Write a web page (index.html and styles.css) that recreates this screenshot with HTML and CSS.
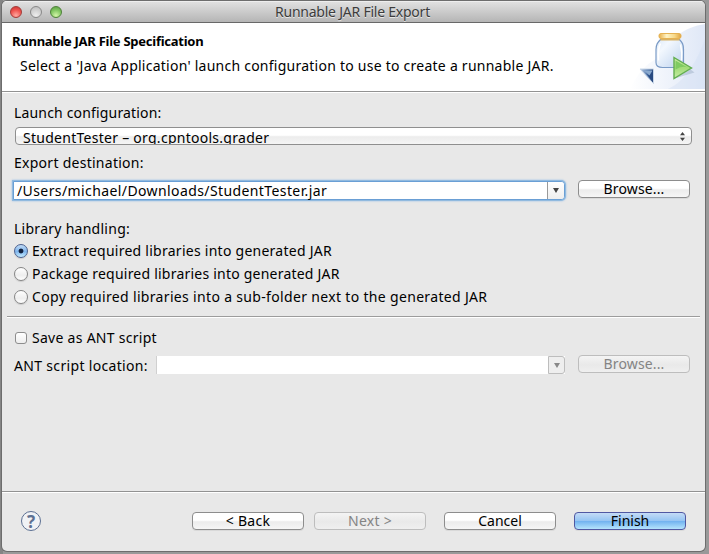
FILE: index.html
```html
<!DOCTYPE html>
<html lang="en">
<head>
<meta charset="utf-8">
<title>Runnable JAR File Export</title>
<link rel="stylesheet" href="styles.css">
</head>
<body>
<div class="window">
  <div class="titlebar">
    <div class="lights"><i class="light red"></i><i class="light gray"></i><i class="light green"></i></div>
    <span class="title">Runnable JAR File Export</span>
  </div>
  <header class="banner">
    <div class="banner-text">
      <h1><span>Runnable JAR File Specification</span></h1>
      <p><span>Select a 'Java Application' launch configuration to use to create a runnable JAR.</span></p>
    </div>
    <svg class="art" width="75" height="66" viewBox="0 0 75 66">
      <defs>
        <linearGradient id="bg" x1="0" x2="1"><stop offset="0" stop-color="#fff"/><stop offset="1" stop-color="#d5e0f4"/></linearGradient>
        <linearGradient id="glass" x1="0" x2="1" y2="1"><stop offset="0" stop-color="#dce9f6"/><stop offset=".3" stop-color="#f3f8fe"/><stop offset="1" stop-color="#bdd2ee"/></linearGradient>
        <linearGradient id="lid" x1="0" x2="1"><stop offset="0" stop-color="#e9b04a"/><stop offset=".35" stop-color="#fff4c6"/><stop offset=".7" stop-color="#f7d98a"/><stop offset="1" stop-color="#e2a540"/></linearGradient>
        <linearGradient id="blue" x1="0" x2="1"><stop offset="0" stop-color="#c3d3e6"/><stop offset=".6" stop-color="#4b71a8"/><stop offset="1" stop-color="#1c3769"/></linearGradient>
        <linearGradient id="go" x1="0" x2="0" y2="1"><stop offset="0" stop-color="#d3efaa"/><stop offset=".5" stop-color="#a2dc78"/><stop offset="1" stop-color="#c6eda6"/></linearGradient>
      </defs>
      <path d="M0 66C9 48 17 40 30 34C38 17 54 4 75 1V66Z" fill="url(#bg)" opacity=".75"/>
      <path d="M38 66C56 58 68 36 75 16V66Z" fill="#d2def3" opacity=".4"/>
      <g transform="translate(10.500 -.5)">
        <path d="M34 56L54 50L50 47Z" fill="#9eafc5" opacity=".5"/>
        <path d="M21 16C17 20 15.500 22 15.500 27V40Q15.500 45 22 45H37Q43 45 43 40V27C43 22 42 20 38 16Z" fill="url(#glass)" stroke="#7b9bc6" stroke-width="1.2"/>
        <path d="M20 21Q17.500 25 18 38M40 22Q42 30 41 38" fill="none" stroke="#fff" stroke-width="1.5"/>
        <path d="M20 17H39" stroke="#d8b165" stroke-width="2"/>
        <rect x="18.500" y="11" width="22" height="5" rx="2" fill="url(#lid)" stroke="#e5b253"/>
        <path d="M-.5 46.500H13V61Z" fill="url(#blue)" stroke="#c8d6e7"/>
        <path d="M5 49L12.500 48V60Z" fill="#294a80"/><path d="M3 48H12L9 53Z" fill="#8aa9ce"/>
        <path d="M33.500 35L51 45.500L33.500 56Z" fill="url(#go)" stroke="#62ad50" stroke-width="1.4"/>
        <path d="M35 38V47Q41 43 47 45Z" fill="#7fcb62"/>
      </g>
    </svg>
  </header>
  <main class="form">
    <div class="label"><span class="t-launch">Launch configuration:</span></div>
    <div class="select">
      <span class="t-select">StudentTester – org.cpntools.grader</span>
      <svg width="5" height="9" viewBox="0 0 5 9"><path d="M2.500 0L5 3.300H0ZM2.500 9L5 5.700H0Z" fill="#444"/></svg>
    </div>
    <div class="label export"><span class="t-export">Export destination:</span></div>
    <div class="row dest">
      <div class="combo focused"><span class="t-path">/Users/michael/Downloads/StudentTester.jar</span><b class="drop"></b></div>
      <button class="btn"><span class="t-browse">Browse...</span></button>
    </div>
    <div class="label library"><span class="t-library">Library handling:</span></div>
    <div class="option"><i class="radio on"></i><span class="t-extract">Extract required libraries into generated JAR</span></div>
    <div class="option"><i class="radio"></i><span class="t-package">Package required libraries into generated JAR</span></div>
    <div class="option"><i class="radio"></i><span class="t-copy">Copy required libraries into a sub-folder next to the generated JAR</span></div>
    <div class="rule"></div>
    <div class="option save"><i class="check"></i><span class="t-save">Save as ANT script</span></div>
    <div class="row ant">
      <span class="ant-label"><span class="t-ant">ANT script location:</span></span>
      <div class="combo off"><b class="drop"></b></div>
      <button class="btn disabled" disabled><span class="t-browse">Browse...</span></button>
    </div>
  </main>
  <footer class="footer">
    <span class="help">?</span>
    <button class="btn"><span class="t-back">&lt; Back</span></button>
    <button class="btn disabled" disabled><span class="t-next">Next &gt;</span></button>
    <button class="btn cancel"><span class="t-cancel">Cancel</span></button>
    <button class="btn primary"><span class="t-finish">Finish</span></button>
  </footer>
</div>
</body>
</html>
```
FILE: styles.css
```css
* { box-sizing: border-box; }
body {
  margin: 0;
  width: 709px;
  height: 554px;
  padding: 1px 3px 3px 2px;
  overflow: hidden;
  background: linear-gradient(90deg, #858585 0, #858585 3px, #999 3px, #999 100%);
  font: 14px/18px "Noto Sans", sans-serif;
  color: #000;
}
span { white-space: nowrap; }
.window {
  width: 703px;
  height: 550px;
  display: flex;
  flex-direction: column;
  overflow: hidden;
  border-radius: 5px;
  background: #e8e8e8;
  box-shadow: 0 0 0 1px #6d6d6d;
}
.titlebar {
  flex: 0 0 22px;
  display: grid;
  grid-template-columns: 70px 1fr 72px;
  align-items: center;
  border-bottom: 1px solid #686868;
  background: linear-gradient(#e2e2e2, #b5b5b5);
  box-shadow: inset 0 1px #eee;
}
.lights { display: flex; gap: 8px; padding-left: 8px; }
.light { width: 12px; height: 12px; border-radius: 50%; border: 1px solid #888; }
.red { border-color: #a33b38; background: radial-gradient(circle at 50% 85%, #ffaaa0, #ef5550 55%, #c9322f); }
.gray { background: radial-gradient(circle at 50% 85%, #eee, #c9c9c9 70%, #bbb); }
.green { border-color: #4e8139; background: radial-gradient(circle at 50% 85%, #d4f6a8, #83c763 55%, #579a3e); }
.title { justify-self: center; color: #3c3c3c; text-shadow: 0 1px #e8e8e8; letter-spacing: -.23px; }
.banner {
  flex: 0 0 69px;
  display: flex;
  justify-content: space-between;
  background: #fff;
  border-bottom: 1px solid #929292;
}
.banner-text { padding: 9px 0 0 10px; }
h1 { margin: 0; font-size: 13px; line-height: 18px; font-weight: 700; letter-spacing: -.26px; }
p { margin: 7px 0 0 8px; letter-spacing: .245px; }
.art { display: block; }
.form { flex: 1; padding: 12px 5px 0; box-shadow: inset 0 1px #fff; }
.label { height: 18px; padding-left: 7px; }
.select {
  display: flex;
  justify-content: space-between;
  align-items: center;
  width: 677px;
  height: 18px;
  margin: 5px 0 0 8px;
  padding: 3px 6px 0 7px;
  border: 1px solid #8f8f8f;
  border-radius: 4px;
  background: linear-gradient(#fff 45%, #ececec 55%, #f5f5f5);
  overflow: hidden;
}
.select svg { margin-top: -3px; }
.export { margin-top: 9px; }
.row { display: flex; }
.dest { height: 21px; margin: 8px 0 0 6px; align-items: flex-start; }
.combo { display: flex; justify-content: space-between; background: #fff; }
.focused {
  width: 552px;
  height: 19px;
  padding-left: 3px;
  margin-top: 1px;
  border: 1px solid #6a9fd5;
  border-radius: 0 4px 4px 0;
  box-shadow: 0 0 0 1px #91badf, 0 0 2px 1px #8bb8e6;
}
.drop {
  width: 17px;
  margin-left: auto;
  display: flex;
  align-items: center;
  justify-content: center;
  border-left: 1px solid #999;
  border-radius: 0 3px 3px 0;
  background: linear-gradient(#fff, #eee);
}
.drop::before { content: ""; border: 3.5px solid transparent; border-top: 5px solid #444; border-bottom: 0; }
.btn {
  flex: none;
  width: 112px;
  height: 18px;
  display: flex;
  align-items: center;
  justify-content: center;
  padding: 0;
  border: 1px solid #8d8d8d;
  border-radius: 4px;
  background: linear-gradient(#fff 45%, #ececec 55%, #f6f6f6);
  box-shadow: 0 1px #d9d9d9;
  font: inherit;
  color: #000;
}
.dest .btn { margin-left: 13px; }
.disabled { color: #848484; border-color: #bdbdbd; background: linear-gradient(#f4f4f4, #e9e9e9 55%, #efefef); box-shadow: none; }
.primary { border-color: #5058a2; background: linear-gradient(#c4dbf6, #96c5f3 48%, #72b3f0 52%, #b5e4fc); }
.library { margin-top: 19px; }
.option { display: flex; align-items: center; height: 23px; padding-left: 7px; gap: 4px; }
.library + .option { margin-top: 1px; }
.radio { width: 14px; height: 14px; border: 1px solid #858585; border-radius: 50%; background: linear-gradient(#fff, #eee 60%, #fff); box-shadow: 0 1px 1px #ccc; }
.radio.on { border-color: #4a608f; background: radial-gradient(circle, #12223f 0 2px, transparent 2.8px), linear-gradient(#c2dbf5, #7eb4ec 55%, #c5edff); }
.rule { height: 2px; margin: 8px 0 0; width: 693px; background: linear-gradient(#9c9c9c 50%, #fff 50%); }
.save { margin-top: 8px; gap: 5px; padding-left: 8px; }
.check { width: 12px; height: 12px; border: 1px solid #8d8d8d; border-radius: 3px; background: linear-gradient(#fff, #eee); }
.ant { margin: 6px 0 0 7px; height: 20px; }
.ant-label { width: 142px; padding-top: 2px; }
.off { width: 409px; height: 18px; margin-top: 1px; border-left: 1px solid #d0d0d0; }
.off .drop { border: 1px solid #bdbdbd; background: #eee; }
.off .drop::before { border-top-color: #888; }
.ant .btn { margin-left: 13px; }
.footer {
  flex: 0 0 60px;
  display: flex;
  align-items: flex-start;
  padding: 20px 0 0 19px;
  border-top: 1px solid #929292;
  box-shadow: inset 0 1px #fff;
}
.help {
  width: 20px;
  height: 20px;
  margin: -1px 151px 0 0;
  border: 1px solid #5b6f92;
  border-radius: 50%;
  background: #f0f2f5;
  color: #5d7192;
  text-align: center;
  font: 700 17px/19px "Noto Sans", sans-serif;
}
.footer .btn + .btn { margin-left: 10px; }
.footer .btn.cancel, .footer .btn.primary { margin-left: 18px; }

.t-launch { letter-spacing: .17px; }
.t-select { letter-spacing: .27px; }
.t-export, .t-library { letter-spacing: .27px; }
.t-path { letter-spacing: .4px; }
.t-extract { letter-spacing: .26px; }
.t-package { letter-spacing: .22px; }
.t-copy { letter-spacing: .33px; }
.t-save { letter-spacing: .28px; }
.t-ant { letter-spacing: .33px; }
.t-browse { letter-spacing: .15px; }
.t-back, .t-next { letter-spacing: .25px; }
```
